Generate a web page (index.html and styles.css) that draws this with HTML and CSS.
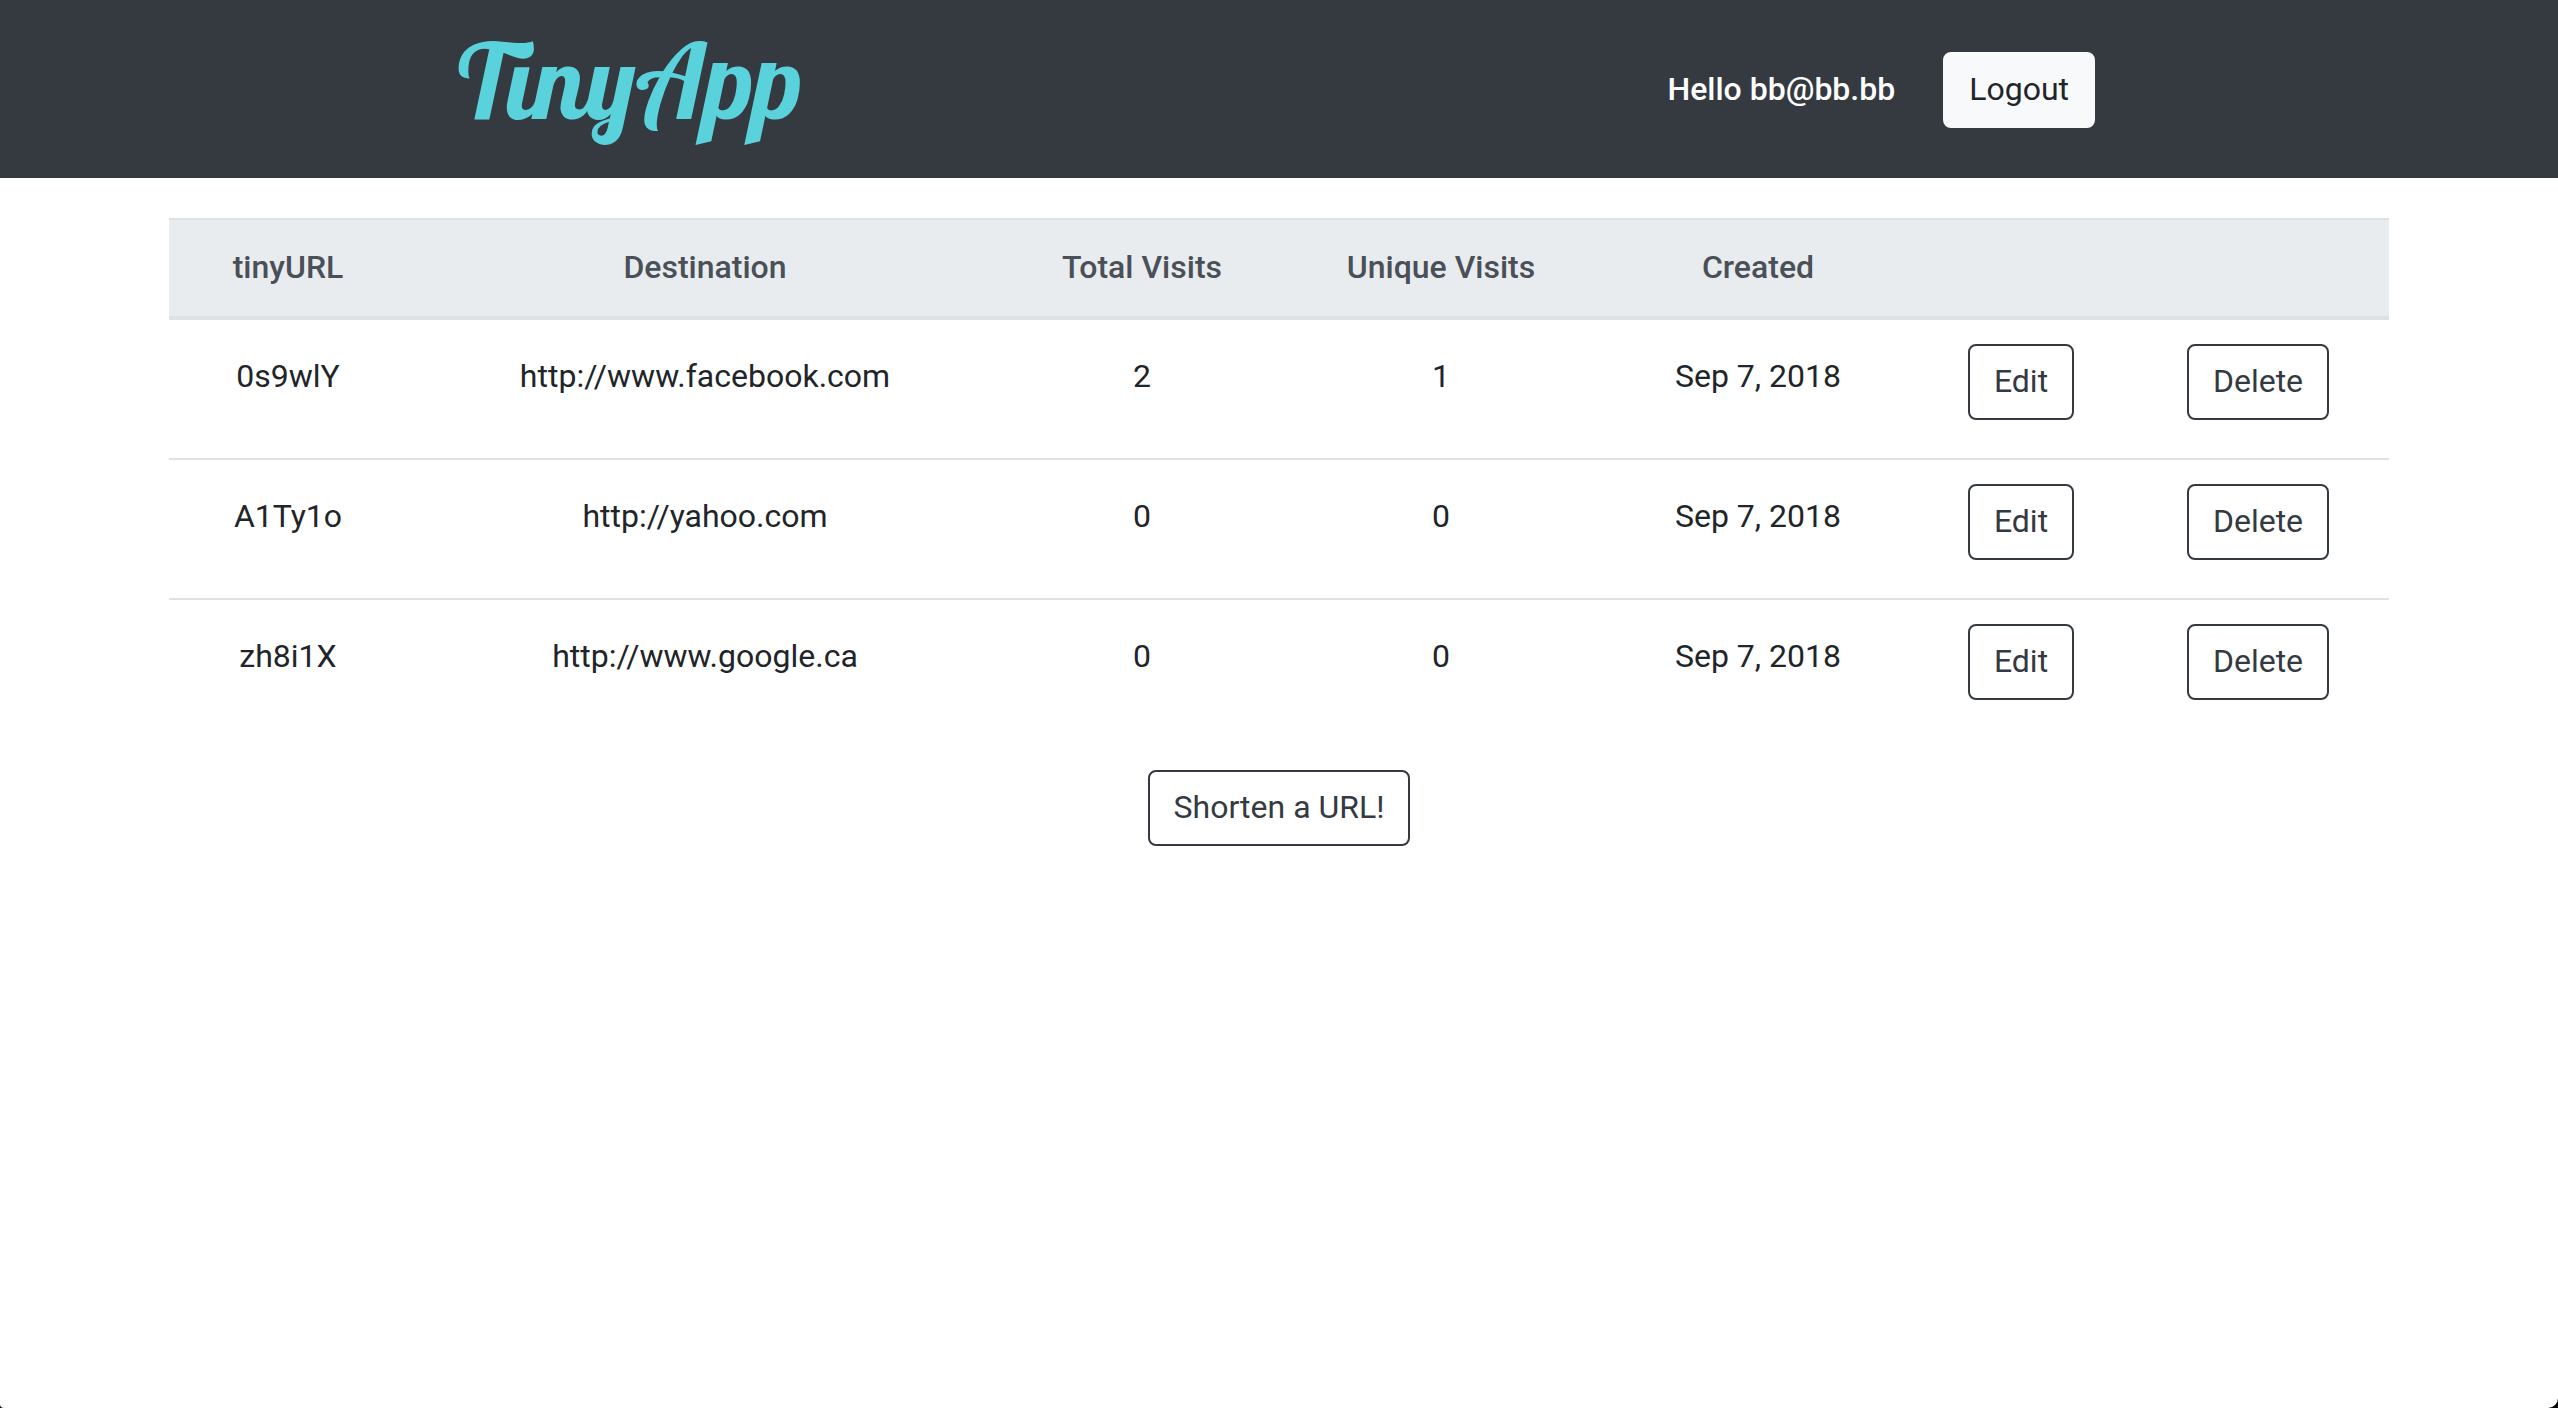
FILE: index.html
```html
<!DOCTYPE html>
<html lang="en">
<head>
  <meta charset="utf-8">
  <meta name="viewport" content="width=device-width, initial-scale=1">
  <title>TinyApp</title>
  <link rel="stylesheet" href="styles.css">
</head>
<body>
  <header class="site-header">
    <a class="brand" href="/">TinyApp</a>
    <form class="session">
      <span class="greeting">Hello bb@bb.bb</span>
      <button class="btn btn-light" type="button">Logout</button>
    </form>
  </header>
  <main class="container">
    <table class="urls">
      <colgroup>
        <col class="col-id">
        <col class="col-destination">
        <col class="col-total">
        <col class="col-unique">
        <col class="col-created">
        <col class="col-edit">
        <col class="col-delete">
      </colgroup>
      <thead>
        <tr>
          <th scope="col">tinyURL</th>
          <th scope="col">Destination</th>
          <th scope="col">Total Visits</th>
          <th scope="col">Unique Visits</th>
          <th scope="col">Created</th>
          <th></th>
          <th></th>
        </tr>
      </thead>
      <tbody>
        <tr>
          <td>0s9wlY</td>
          <td>http://www.facebook.com</td>
          <td>2</td>
          <td>1</td>
          <td>Sep 7, 2018</td>
          <td class="action"><button class="btn btn-outline" type="button">Edit</button></td>
          <td class="action"><button class="btn btn-outline" type="button">Delete</button></td>
        </tr>
        <tr>
          <td>A1Ty1o</td>
          <td>http://yahoo.com</td>
          <td>0</td>
          <td>0</td>
          <td>Sep 7, 2018</td>
          <td class="action"><button class="btn btn-outline" type="button">Edit</button></td>
          <td class="action"><button class="btn btn-outline" type="button">Delete</button></td>
        </tr>
        <tr>
          <td>zh8i1X</td>
          <td>http://www.google.ca</td>
          <td>0</td>
          <td>0</td>
          <td>Sep 7, 2018</td>
          <td class="action"><button class="btn btn-outline" type="button">Edit</button></td>
          <td class="action"><button class="btn btn-outline" type="button">Delete</button></td>
        </tr>
      </tbody>
    </table>
    <button class="btn btn-outline" type="button">Shorten a URL!</button>
  </main>
</body>
</html>
```
FILE: styles.css
```css
* {
  box-sizing: border-box;
}

html {
  background: #000;
}

body {
  margin: 0;
  min-height: 100vh;
  background: #fff;
  border-radius: 0 0 10px 4px;
  color: #212529;
  font-family: Roboto, sans-serif;
  font-size: 32px;
  line-height: 48px;
}

.site-header {
  display: flex;
  align-items: center;
  justify-content: space-between;
  padding: 25px 18.1% 23px 17.9%;
  background: #343a40;
}

.brand {
  padding-bottom: 20px;
  color: #59d2dc;
  font-family: Lobster, cursive;
  font-size: 104px;
  line-height: 110px;
  text-decoration: none;
}

.session {
  display: flex;
  align-items: center;
  gap: 48px;
}

.greeting {
  padding-bottom: 2px;
  color: #fff;
  font-weight: 500;
}

.container {
  display: flex;
  flex-direction: column;
  align-items: center;
  gap: 32px;
  width: 100%;
  max-width: 2220px;
  margin: 40px auto 0;
}

.urls {
  width: 100%;
  table-layout: fixed;
  border-collapse: separate;
  border-spacing: 0;
  text-align: center;
}

.col-id { width: 238px; }
.col-destination { width: 596px; }
.col-total { width: 278px; }
.col-unique { width: 320px; }
.col-created { width: 314px; }
.col-edit { width: 212px; }
.col-delete { width: 262px; }

.urls th {
  padding: 23px 24px 25px;
  border-top: 2px solid #dee2e6;
  border-bottom: 4px solid #dee2e6;
  background: #e9ecef;
  color: #495057;
  font-weight: 500;
}

.urls td {
  padding: 32px 24px 24px;
  vertical-align: top;
}

.urls .action {
  padding: 24px 24px 38px;
}

.urls tr + tr td {
  border-top: 2px solid #dee2e6;
}

.btn {
  display: block;
  padding: 11px 24px 13px;
  border: 2px solid;
  border-radius: 8px;
  font: inherit;
  cursor: pointer;
}

.action .btn {
  margin: 0 auto;
}

.btn-light {
  border-color: #f8f9fa;
  background: #f8f9fa;
  color: #212529;
}

.btn-outline {
  border-color: #343a40;
  background: transparent;
  color: #343a40;
}
```
